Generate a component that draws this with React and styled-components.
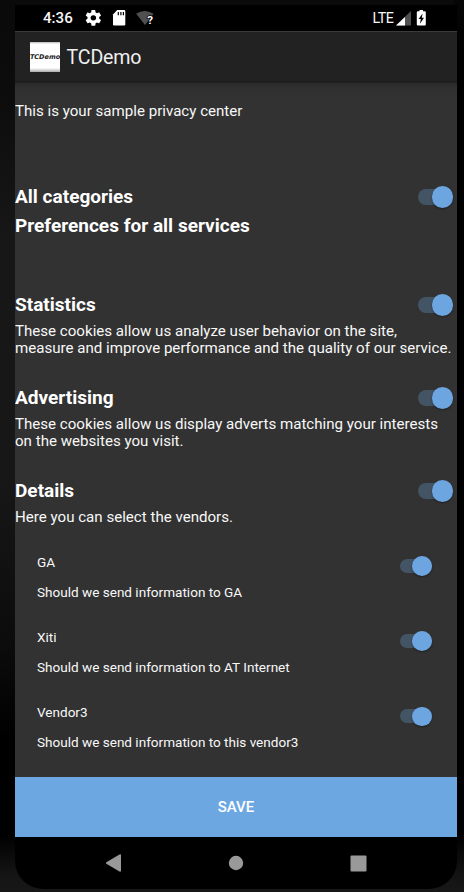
import React from "react";
import styled, { createGlobalStyle } from "styled-components";

const GlobalStyle = createGlobalStyle`
  * { box-sizing: border-box; }
  body { margin: 0; background: #000; }
  h1, h2, h3, p { margin: 0; }
`;

const Backdrop = styled.div`
  width: 464px;
  height: 892px;
  padding: 5px 7px 3px 15px;
  overflow: hidden;
  background:
    linear-gradient(180deg, #060606 0, #000 60px, #000 835px, #131313 875px, #171717 892px) right / 10px 100% no-repeat,
    linear-gradient(180deg, #0a0a0a 0, #0c0c0c 90px, #171717 240px, #171717 480px, #0b0b0b 650px, #000 740px, #000 835px, #151515 875px, #171717 892px);
  font-family: Roboto, sans-serif;
  color: #f8f8f8;
`;

const Phone = styled.main`
  width: 442px;
  height: 884px;
  display: flex;
  flex-direction: column;
  overflow: hidden;
  background: #000;
  border-radius: 0 0 28px 28px;
`;

const StatusBar = styled.div`
  height: 26px;
  padding: 0 31px 0 28px;
  display: flex;
  align-items: center;
  justify-content: space-between;
  background: #000;
`;

const StatusGroup = styled.div`
  display: flex;
  align-items: center;
  height: 26px;
`;

const Clock = styled.span`
  width: 42px;
  font-size: 15.1px;
  font-weight: 500;
  line-height: 28px;
  white-space: nowrap;
`;

const Network = styled.span`
  width: 23.5px;
  font-size: 14.3px;
  letter-spacing: -0.5px;
  line-height: 25px;
`;

const Icon = styled.svg`
  display: block;
  flex: none;
`;

const AppBar = styled.header`
  height: 50px;
  flex: none;
  padding: 0 15px;
  display: flex;
  align-items: center;
  gap: 6.5px;
  background: #222;
  border-top: 1px solid #3b3b3b;
`;

const AppLogo = styled.div`
  width: 30px;
  height: 30px;
  margin-top: 1px;
  overflow: hidden;
  display: flex;
  align-items: center;
  justify-content: center;
  background: linear-gradient(#b5b5b5 0, #fff 2px, #fff 26px, #e9e9e9 27px, #aaa 30px);
  color: #222;
  font: italic 700 6.5px/32px "DejaVu Sans", sans-serif;
`;

const AppTitle = styled.h1`
  margin-top: 2px;
  font-size: 19.6px;
  font-weight: 400;
  letter-spacing: -0.15px;
  line-height: 30px;
  color: #f0f0f0;
`;

const Content = styled.section`
  height: 696px;
  flex: none;
  padding-top: 21px;
  background: linear-gradient(#1a1a1a 0, #1b1b1b 1px, #2a2a2a 2px, #303030 8px, #323232 14px);
`;

const Intro = styled.p`
  height: 82px;
  font-size: 15.1px;
  line-height: 18px;
`;

const Section = styled.section`
  height: ${(p) => p.$height}px;
`;

const SectionHeader = styled.div`
  height: 26px;
  padding-right: 4px;
  display: flex;
  align-items: center;
  justify-content: space-between;
`;

const SectionTitle = styled.h2`
  font-size: 19.05px;
  font-weight: 700;
  line-height: 26px;
  color: #fff;
`;

const Subtitle = styled(SectionTitle)`
  margin-top: 3px;
`;

const Description = styled.p`
  margin-top: 5px;
  font-size: 15.1px;
  line-height: 17.4px;
  white-space: pre;
`;

const Switch = styled.button`
  width: ${(p) => (p.$small ? 32 : 35.5)}px;
  height: ${(p) => (p.$small ? 14 : 15.5)}px;
  padding: 0;
  display: flex;
  align-items: center;
  justify-content: flex-end;
  flex: none;
  border: 0;
  border-radius: 8px;
  background: #435464;
`;

const Thumb = styled.span`
  width: ${(p) => (p.$small ? 19.7 : 21.5)}px;
  height: ${(p) => (p.$small ? 19.7 : 21.5)}px;
  flex: none;
  border-radius: 50%;
  background: #6ca5e0;
  box-shadow: 0 1px 2px rgba(0, 0, 0, 0.4);
`;

const Vendor = styled.article`
  height: 75.2px;
  padding: 0 25px 0 22px;
  display: flex;
  justify-content: space-between;
`;

const VendorText = styled.div`
  display: grid;
  grid-template-rows: 30px 30px;
  font-size: 13.55px;
  line-height: 14.4px;
`;

const VendorName = styled.h3`
  font-size: inherit;
  font-weight: 400;
`;

const VendorSwitch = styled.div`
  height: 22px;
  display: flex;
  align-items: center;
`;

const SaveButton = styled.button`
  height: 60px;
  flex: none;
  border: 0;
  padding: 1px 0 0;
  background: #6ca7e2;
  color: #fff;
  font: 500 15px/59px Roboto, sans-serif;
`;

const NavBar = styled.nav`
  height: 52px;
  display: flex;
  align-items: center;
  justify-content: space-between;
  padding: 0 90px;
`;

const sections = [
  {
    title: "Statistics",
    text: "These cookies allow us analyze user behavior on the site,\nmeasure and improve performance and the quality of our service.",
    height: 93,
  },
  {
    title: "Advertising",
    text: "These cookies allow us display adverts matching your interests\non the websites you visit.",
    height: 93,
  },
  { title: "Details", text: "Here you can select the vendors.", height: 77 },
];

const vendors = [
  { name: "GA", text: "Should we send information to GA" },
  { name: "Xiti", text: "Should we send information to AT Internet" },
  { name: "Vendor3", text: "Should we send information to this vendor3" },
];

const Toggle = ({ label, small }) => (
  <Switch role="switch" aria-checked="true" aria-label={label} $small={small}>
    <Thumb $small={small} />
  </Switch>
);

const StatusIcons = () => (
  <Icon width="70" height="26" viewBox="0 0 70 26">
    <g transform="translate(-1 3.5) scale(.78)">
      <path
        fill="#fff"
        d="M19.43 12.98c.04-.32.07-.64.07-.98s-.03-.66-.07-.98l2.11-1.65c.19-.15.24-.42.12-.64l-2-3.46c-.12-.22-.39-.3-.61-.22l-2.49 1c-.52-.4-1.08-.73-1.69-.98l-.38-2.65A.49.49 0 0 0 14 2h-4c-.25 0-.46.18-.49.42l-.38 2.65c-.61.25-1.17.59-1.69.98l-2.49-1c-.23-.09-.49 0-.61.22l-2 3.46c-.13.22-.07.49.12.64l2.11 1.65c-.04.32-.07.65-.07.98s.03.66.07.98l-2.11 1.65c-.19.15-.24.42-.12.64l2 3.46c.12.22.39.3.61.22l2.49-1c.52.4 1.08.73 1.69.98l.38 2.65c.03.24.24.42.49.42h4c.25 0 .46-.18.49-.42l.38-2.65c.61-.25 1.17-.59 1.69-.98l2.49 1c.23.09.49 0 .61-.22l2-3.46c.12-.22.07-.49-.12-.64zM12 15.5a3.5 3.5 0 1 1 0-7 3.5 3.5 0 0 1 0 7z"
      />
    </g>
    <path fill="#fff" d="M32.2 5H39q1.300 0 1.300 1.300V19.200q0 1.300-1.300 1.300H29.300q-1.300 0-1.300-1.300V9.400z" />
    <path d="M33.300 7v3.200M35.900 7v3.200M38.400 7v3.200" stroke="#000" strokeWidth="1.200" />
    <path fill="#505050" d="M51.200 8.800Q59.500 3.200 68.500 8.800L60 20z" />
    <text x="62.200" y="19.200" fill="#fff" stroke="#000" strokeWidth="1.500" paintOrder="stroke" fontSize="11.500" fontWeight="700">?</text>
  </Icon>
);

const SignalIcons = () => (
  <Icon width="30" height="26" viewBox="0 0 30 26">
    <path fill="#505050" d="M15 6v14.500H0z" />
    <path fill="#fff" d="M9 12v8.500H0z" />
    <path fill="#fff" d="M23.500 5h3.500v1.300h1.800q1 0 1 1v12.200q0 1-1 1h-7q-1 0-1-1V7.300q0-1 1-1h1.700z" />
    <path fill="#000" d="M26.600 8.500l-4 5.500h2.200l-.8 4.800 4-6h-2.200z" />
  </Icon>
);

export default function App() {
  return (
    <>
      <GlobalStyle />
      <Backdrop>
        <Phone>
          <StatusBar>
            <StatusGroup>
              <Clock>4:36</Clock>
              <StatusIcons />
            </StatusGroup>
            <StatusGroup>
              <Network>LTE</Network>
              <SignalIcons />
            </StatusGroup>
          </StatusBar>
          <AppBar>
            <AppLogo>TCDemo</AppLogo>
            <AppTitle>TCDemo</AppTitle>
          </AppBar>
          <Content>
            <Intro>This is your sample privacy center</Intro>
            <Section $height={108}>
              <SectionHeader>
                <SectionTitle>All categories</SectionTitle>
                <Toggle label="All categories" />
              </SectionHeader>
              <Subtitle>Preferences for all services</Subtitle>
            </Section>
            {sections.map((s) => (
              <Section key={s.title} $height={s.height}>
                <SectionHeader>
                  <SectionTitle>{s.title}</SectionTitle>
                  <Toggle label={s.title} />
                </SectionHeader>
                <Description>{s.text}</Description>
              </Section>
            ))}
            {vendors.map((v) => (
              <Vendor key={v.name}>
                <VendorText>
                  <VendorName>{v.name}</VendorName>
                  <p>{v.text}</p>
                </VendorText>
                <VendorSwitch>
                  <Toggle label={v.name} small />
                </VendorSwitch>
              </Vendor>
            ))}
          </Content>
          <SaveButton>SAVE</SaveButton>
          <NavBar>
            <Icon width="17" height="20" viewBox="0 0 17 20">
              <path fill="#999" d="M1.300 9.200L14.500 1.600q1.500-.8 1.500.8v15.200q0 1.600-1.500.8L1.300 10.800q-1-.8 0-1.600z" />
            </Icon>
            <Icon width="16" height="16" viewBox="0 0 16 16">
              <circle cx="8" cy="8" r="7.200" fill="#999" />
            </Icon>
            <Icon width="17" height="17" viewBox="0 0 17 17">
              <rect x=".5" y=".5" width="16" height="16" rx="1" fill="#999" />
            </Icon>
          </NavBar>
        </Phone>
      </Backdrop>
    </>
  );
}
